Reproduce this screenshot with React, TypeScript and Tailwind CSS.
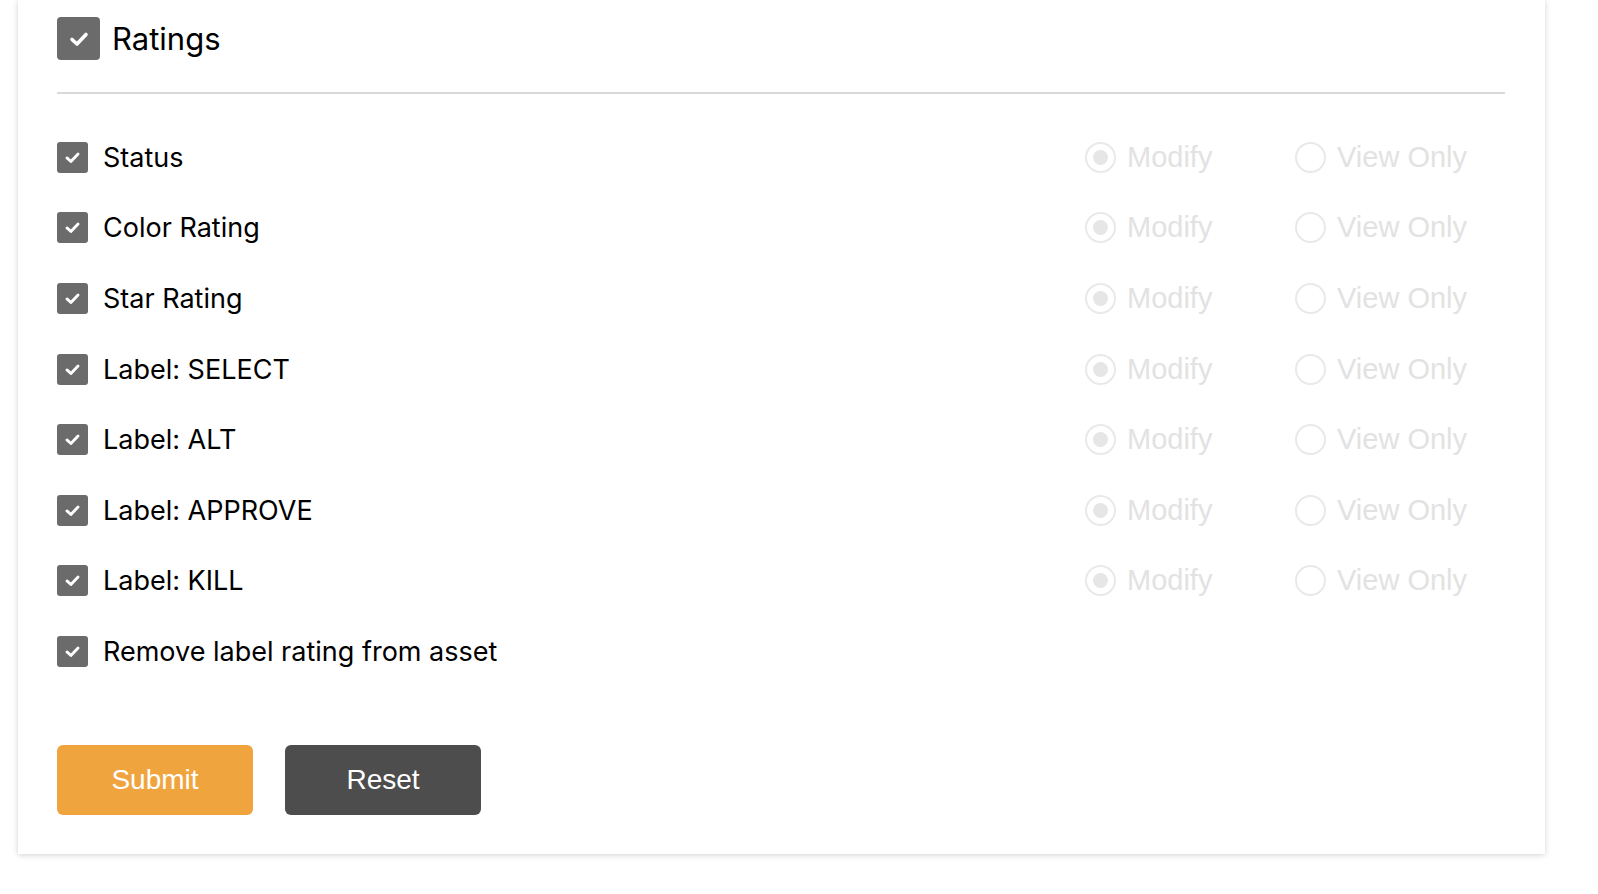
const rows = [
  { label: "Status", radios: true },
  { label: "Color Rating", radios: true },
  { label: "Star Rating", radios: true },
  { label: "Label: SELECT", radios: true },
  { label: "Label: ALT", radios: true },
  { label: "Label: APPROVE", radios: true },
  { label: "Label: KILL", radios: true },
  { label: "Remove label rating from asset", radios: false },
];

const Check = ({ size }: { size: "lg" | "sm" }) => (
  <div
    className={`${
      size === "lg" ? "h-[43px] w-[43px] rounded-[4px]" : "h-[31px] w-[31px] rounded-[3px]"
    } flex shrink-0 items-center justify-center bg-[#6b6b6b]`}
  >
    <svg
      viewBox="0 0 24 24"
      className={size === "lg" ? "h-[24px] w-[24px]" : "h-[19px] w-[19px]"}
      fill="none"
      stroke="white"
      strokeWidth="3.6"
      strokeLinecap="round"
      strokeLinejoin="round"
    >
      <polyline points="5,12.5 10,17 19,7.5" />
    </svg>
  </div>
);

const Radio = ({ checked, label }: { checked: boolean; label: string }) => (
  <div className="flex w-[210px] items-center gap-[11px]">
    <div className="flex h-[31px] w-[31px] shrink-0 items-center justify-center rounded-full border-2 border-[#e9e9e9]">
      {checked && <div className="h-[15px] w-[15px] rounded-full bg-[#e6e6e6]" />}
    </div>
    <span className="text-[29px] leading-none text-[#e2e2e2] [font-family:'Liberation_Sans',Arial,sans-serif]">
      {label}
    </span>
  </div>
);

export default function App() {
  return (
    <div className="min-h-screen bg-white [font-family:Inter,'Liberation_Sans',sans-serif]">
      <div className="ml-[18px] w-[1527px] bg-white pl-[39px] pr-[40px] pt-[17px] pb-[39px] shadow-[0_1px_6px_rgba(0,0,0,0.18)]">
        <div className="flex items-center gap-[12px]">
          <Check size="lg" />
          <span className="text-[31px] leading-none text-black">Ratings</span>
        </div>
        <div className="mt-[32px] h-[2px] bg-[#d9d9d9]" />
        <div className="mt-[28px] flex flex-col">
          {rows.map((r) => (
            <div key={r.label} className="flex h-[70.6px] items-center justify-between">
              <div className="flex items-center gap-[15px]">
                <Check size="sm" />
                <span className="text-[27px] leading-none text-black">{r.label}</span>
              </div>
              {r.radios && (
                <div className="flex w-[420px]">
                  <Radio checked label="Modify" />
                  <Radio checked={false} label="View Only" />
                </div>
              )}
            </div>
          ))}
        </div>
        <div className="mt-[58px] flex gap-[32px] [font-family:'Liberation_Sans',Arial,sans-serif]">
          <button className="flex h-[70px] w-[196px] items-center justify-center rounded-[6px] bg-[#f0a43e] text-[28px] text-white">
            Submit
          </button>
          <button className="flex h-[70px] w-[196px] items-center justify-center rounded-[6px] bg-[#4d4d4d] text-[28px] text-white">
            Reset
          </button>
        </div>
      </div>
    </div>
  );
}
